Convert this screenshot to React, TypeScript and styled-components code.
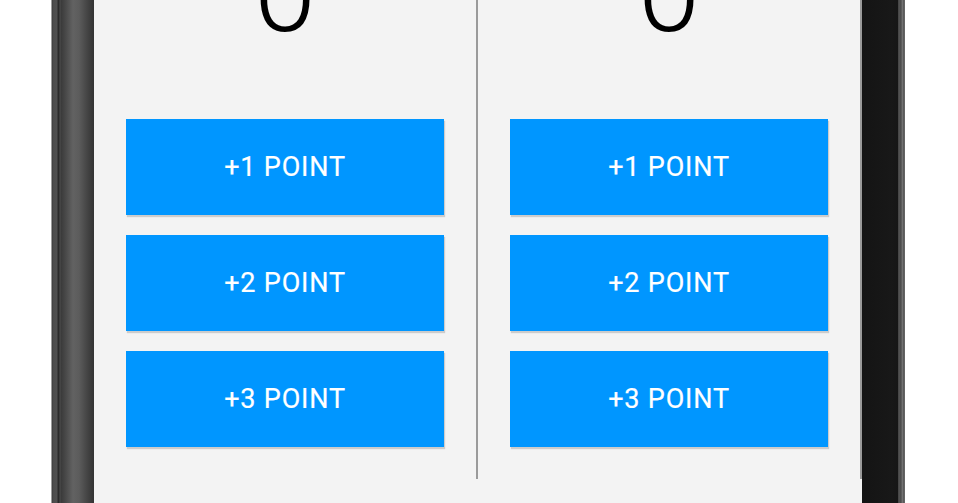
import React from "react";
import styled, { createGlobalStyle } from "styled-components";

const Global = createGlobalStyle`
  html, body { margin: 0; padding: 0; background: #ffffff; }
  body { font-family: Roboto, "Noto Sans", sans-serif; }
`;

const Page = styled.div`
  display: flex;
  height: 503px;
  width: 958px;
  overflow: hidden;
  background: #ffffff;
`;

const Gutter = styled.div<{ $w: number }>`
  width: ${(p) => p.$w}px;
  flex: none;
  background: #ffffff;
`;

const BezelLeft = styled.div`
  width: 43px;
  flex: none;
  background: linear-gradient(
    to right,
    #9c9c9c 0px,
    #9c9c9c 1px,
    #3a3a3a 1px,
    #4c4c4c 2px,
    #505050 6px,
    #2a2a2a 7px,
    #2a2a2a 8px,
    #4e4e4e 9px,
    #3a3a3a 10px,
    #4a4a4a 15px,
    #626262 22px,
    #5c5c5c 28px,
    #454545 36px,
    #333333 43px
  );
`;

const BezelRight = styled.div`
  width: 43px;
  flex: none;
  background: linear-gradient(
    to right,
    #141414 0px,
    #181818 30px,
    #161616 36px,
    #3a3a3a 36px,
    #545454 37px,
    #4a4a4a 39px,
    #6c6c6c 40px,
    #777777 41px,
    #3e3e3e 42px,
    #8a8a8a 43px
  );
`;

const Screen = styled.div`
  width: 768px;
  flex: none;
  background: #f3f3f3;
  overflow: hidden;
`;

const Columns = styled.div`
  display: flex;
  height: 479px;
`;

const Column = styled.div`
  width: 384px;
  box-sizing: border-box;
  border-right: 2px solid #9a9a9a;
  display: flex;
  flex-direction: column;
  align-items: center;
  padding: 0 32px;
`;

const Score = styled.div`
  font-family: Roboto, "Noto Sans", sans-serif;
  font-weight: 300;
  font-size: 112px;
  line-height: 112px;
  height: 112px;
  margin-top: -63px;
  margin-bottom: 70px;
  color: #000000;
`;

const PointButton = styled.button`
  width: 318px;
  height: 96px;
  flex: none;
  border: none;
  margin: 0 0 20px 0;
  padding: 0;
  background: #0096ff;
  color: #ffffff;
  font-family: Roboto, "Noto Sans", sans-serif;
  font-weight: 400;
  font-size: 27px;
  letter-spacing: 0.03em;
  text-transform: uppercase;
  -webkit-text-stroke: 0.2px #ffffff;
  box-shadow: 1px 2px 1px rgba(0, 0, 0, 0.16);
  cursor: pointer;
`;

const teams = ["A", "B"];
const points = [1, 2, 3];

export default function App() {
  return (
    <>
      <Global />
      <Page>
        <Gutter $w={51} />
        <BezelLeft />
        <Screen>
          <Columns>
            {teams.map((t) => (
              <Column key={t}>
                <Score>0</Score>
                {points.map((p) => (
                  <PointButton key={p}>+{p} Point</PointButton>
                ))}
              </Column>
            ))}
          </Columns>
        </Screen>
        <BezelRight />
        <Gutter $w={53} />
      </Page>
    </>
  );
}
